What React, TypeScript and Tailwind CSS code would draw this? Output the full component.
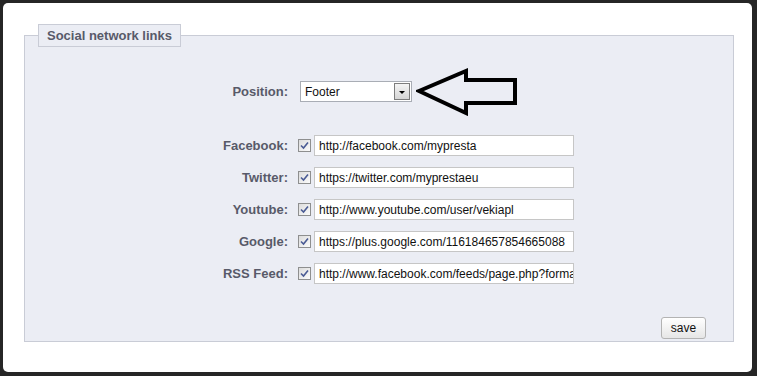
import React from 'react';

const links = [
  { label: 'Facebook:', url: 'http://facebook.com/mypresta' },
  { label: 'Twitter:', url: 'https://twitter.com/myprestaeu' },
  { label: 'Youtube:', url: 'http://www.youtube.com/user/vekiapl' },
  { label: 'Google:', url: 'https://plus.google.com/116184657854665088' },
  { label: 'RSS Feed:', url: 'http://www.facebook.com/feeds/page.php?format=rss20' },
];

const Checkbox = () => (
  <span className="flex h-[13px] w-[13px] items-center justify-center border border-[#8e8f8f] bg-gradient-to-br from-[#dcdcdc] to-[#fbfbfb]">
    <svg width="9" height="9" viewBox="0 0 9 9">
      <path d="M1 4.5 L3.5 7 L8 1.5" fill="none" stroke="#4a5b94" strokeWidth="1.6" />
    </svg>
  </span>
);

const Arrow = () => (
  <svg width="106" height="48" viewBox="0 0 106 48" className="-my-[14px] ml-[4px] shrink-0">
    <path
      d="M3 23 L50 3 L50 12 L99 12 L99 35 L50 35 L50 45 Z"
      fill="none"
      stroke="#000"
      strokeWidth="4"
      strokeLinejoin="miter"
    />
  </svg>
);

export default function App() {
  return (
    <div className="h-[376px] w-[757px] overflow-hidden bg-[#262626] pl-[3px] pt-[3px] font-['Liberation_Sans',Arial,sans-serif]">
      <div className="h-[369px] w-[749px] rounded-[5px] bg-white pl-[21px] pt-[21px]">
        <fieldset className="h-[318px] w-[710px] border border-[#c9ccd6] bg-[#ebedf4] px-[13px]">
          <legend className="border border-[#c9ccd6] bg-[#ebedf4] px-[8px] py-[3px] text-[13px] font-bold leading-[15px] text-[#585a69]">
            Social network links
          </legend>

          <div className="flex flex-col">
            <div className="mt-[34px] flex h-[21px] items-center">
              <label className="w-[250px] text-right text-[13px] font-bold text-[#585a69]">Position:</label>
              <div className="ml-[12px] flex h-[21px] w-[112px] items-center border border-[#a9adb5] bg-white">
                <span className="flex-1 pl-[4px] text-[12px] text-[#111]">Footer</span>
                <span className="mr-[1px] flex h-[17px] w-[16px] items-center justify-center border border-[#7d7d7d] bg-gradient-to-b from-[#f4f4f4] to-[#d6d6d6]">
                  <span className="mt-[2px] h-0 w-0 border-x-[3px] border-t-[3px] border-x-transparent border-t-black" />
                </span>
              </div>
              <Arrow />
            </div>

            <div className="mt-[33px] flex flex-col gap-[11px]">
              {links.map((link) => (
                <div key={link.label} className="flex h-[21px] items-center">
                  <label className="w-[250px] text-right text-[13px] font-bold text-[#585a69]">{link.label}</label>
                  <span className="ml-[10px]">
                    <Checkbox />
                  </span>
                  <div className="ml-[3px] flex h-[21px] w-[260px] items-center overflow-hidden border border-[#c6c6c6] bg-white">
                    <span className="whitespace-nowrap pl-[4px] text-[12px] text-[#111]">{link.url}</span>
                  </div>
                </div>
              ))}
            </div>

            <div className="mt-[33px] flex justify-end pr-[14px]">
              <button className="h-[22px] w-[45px] rounded-[3px] border border-[#b3b3b3] bg-gradient-to-b from-white to-[#e6e6e6] text-[12px] text-[#111]">
                save
              </button>
            </div>
          </div>
        </fieldset>
      </div>
    </div>
  );
}
